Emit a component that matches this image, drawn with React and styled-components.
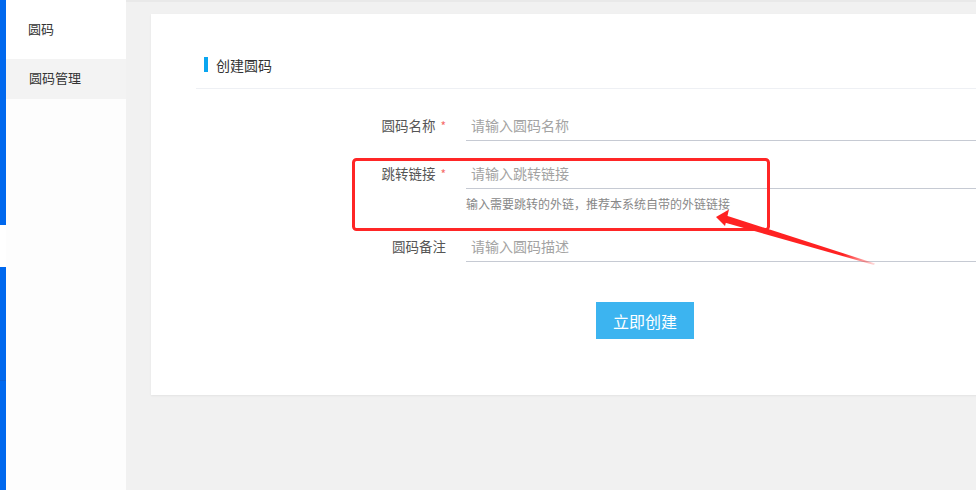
import React from 'react';
import styled, { createGlobalStyle } from 'styled-components';

const GlobalStyle = createGlobalStyle`
  html, body {
    margin: 0;
    padding: 0;
    background: #f1f1f1;
    font-family: 'Noto Sans CJK SC', 'Noto Sans', sans-serif;
  }
  * { box-sizing: border-box; }
`;

const Page = styled.div`
  position: relative;
  display: flex;
  height: 490px;
  overflow: hidden;
`;

const Rail = styled.div`
  width: 6px;
  display: flex;
  flex-direction: column;
  flex-shrink: 0;
`;

const RailPart = styled.div`
  background: ${(p) => (p.$gap ? '#ffffff' : '#0068ee')};
  height: ${(p) => (p.$size ? `${p.$size}px` : 'auto')};
  flex: ${(p) => (p.$size ? 'none' : '1')};
  border-bottom: ${(p) => (p.$seam ? '1px solid #0a60d6' : 'none')};
`;

const Sidebar = styled.nav`
  width: 120px;
  flex-shrink: 0;
  background: #fdfdfd;
  display: flex;
  flex-direction: column;
`;

const MenuItem = styled.a`
  display: flex;
  align-items: center;
  height: ${(p) => p.$height}px;
  padding-left: ${(p) => p.$indent}px;
  padding-bottom: 3px;
  background: ${(p) => (p.$active ? '#f3f3f3' : '#ffffff')};
  color: #333;
  font-size: 13px;
  text-decoration: none;
`;

const Main = styled.main`
  flex: 1;
  min-width: 0;
  padding: 14px 0 0 25px;
  border-top: 2px solid #e9e9e9;
  overflow: hidden;
`;

const Card = styled.section`
  width: 1000px;
  margin-top: -2px;
  background: #ffffff;
  padding: 0 45px 56px;
  box-shadow: 0 1px 2px rgba(0, 0, 0, 0.06);
`;

const CardHeader = styled.header`
  height: 75px;
  display: flex;
  align-items: flex-end;
  padding: 0 0 16px 8px;
  border-bottom: 1px solid #eef0f4;
`;

const Title = styled.h2`
  margin: 0;
  display: flex;
  align-items: center;
  gap: 8px;
  height: 15px;
  font-size: 14px;
  font-weight: normal;
  color: #333;

  &::before {
    content: '';
    width: 4px;
    height: 15px;
    background: #0aa6f0;
  }
`;

const Form = styled.form`
  margin-top: 20px;
  display: flex;
  flex-direction: column;
`;

const Row = styled.div`
  display: grid;
  grid-template-columns: 250px 1fr;
  column-gap: 20px;
  margin-bottom: 16px;
`;

const Label = styled.label`
  height: 32px;
  display: flex;
  align-items: center;
  justify-content: flex-end;
  font-size: 13.5px;
  color: #555;
`;

const Required = styled.span`
  color: #f56c6c;
  margin-left: 5px;
  font-size: 12px;
`;

const Field = styled.div`
  display: flex;
  flex-direction: column;
`;

const Input = styled.input`
  height: 32px;
  border: none;
  border-bottom: 1px solid #c6cad3;
  outline: none;
  padding: 0 5px;
  font-family: inherit;
  font-size: 14px;
  color: #333;
  background: transparent;

  &::placeholder {
    color: #a3a3a3;
  }
`;

const Help = styled.p`
  margin: 5px 0 0;
  line-height: 20px;
  font-size: 12px;
  color: #888;
`;

const Actions = styled.div`
  display: grid;
  grid-template-columns: 250px 1fr;
  column-gap: 20px;
  margin-top: 24px;
`;

const SubmitButton = styled.button`
  grid-column: 2;
  justify-self: start;
  margin-left: 130px;
  width: 98px;
  height: 37px;
  border: none;
  background: #3cb4f0;
  color: #ffffff;
  font-family: inherit;
  font-size: 16px;
  cursor: pointer;
`;

const Annotation = styled.svg`
  position: absolute;
  left: 0;
  top: 0;
  width: 976px;
  height: 490px;
  pointer-events: none;
`;

const fields = [
  { label: '圆码名称', placeholder: '请输入圆码名称', required: true },
  {
    label: '跳转链接',
    placeholder: '请输入跳转链接',
    required: true,
    help: '输入需要跳转的外链，推荐本系统自带的外链链接',
  },
  { label: '圆码备注', placeholder: '请输入圆码描述' },
];

export default function App() {
  return (
    <>
      <GlobalStyle />
      <Page>
        <Rail>
          <RailPart $size={225} />
          <RailPart $gap $size={42} />
          <RailPart $size={114} $seam />
          <RailPart />
        </Rail>
        <Sidebar>
          <MenuItem $height={59} $indent={22}>圆码</MenuItem>
          <MenuItem $height={40} $indent={23} $active>圆码管理</MenuItem>
        </Sidebar>
        <Main>
          <Card>
            <CardHeader>
              <Title>创建圆码</Title>
            </CardHeader>
            <Form onSubmit={(e) => e.preventDefault()}>
              {fields.map((f) => (
                <Row key={f.label}>
                  <Label>
                    {f.label}
                    {f.required && <Required>*</Required>}
                  </Label>
                  <Field>
                    <Input placeholder={f.placeholder} />
                    {f.help && <Help>{f.help}</Help>}
                  </Field>
                </Row>
              ))}
              <Actions>
                <SubmitButton type="submit">立即创建</SubmitButton>
              </Actions>
            </Form>
          </Card>
        </Main>
        <Annotation viewBox="0 0 976 490">
          <defs>
            <linearGradient id="tail" x1="716" y1="217" x2="875" y2="264" gradientUnits="userSpaceOnUse">
              <stop offset="0" stopColor="#ff2222" />
              <stop offset="0.8" stopColor="#ff2222" />
              <stop offset="1" stopColor="#ff2222" stopOpacity="0.15" />
            </linearGradient>
          </defs>
          <rect x="353.5" y="159.5" width="415" height="70" rx="3" fill="none" stroke="#ff2626" strokeWidth="3" />
          <polygon points="723,214.5 875,263.5 874,265 721,221.5" fill="url(#tail)" />
          <polygon points="716,217 729,209.5 725,226" fill="#ff2222" />
        </Annotation>
      </Page>
    </>
  );
}
